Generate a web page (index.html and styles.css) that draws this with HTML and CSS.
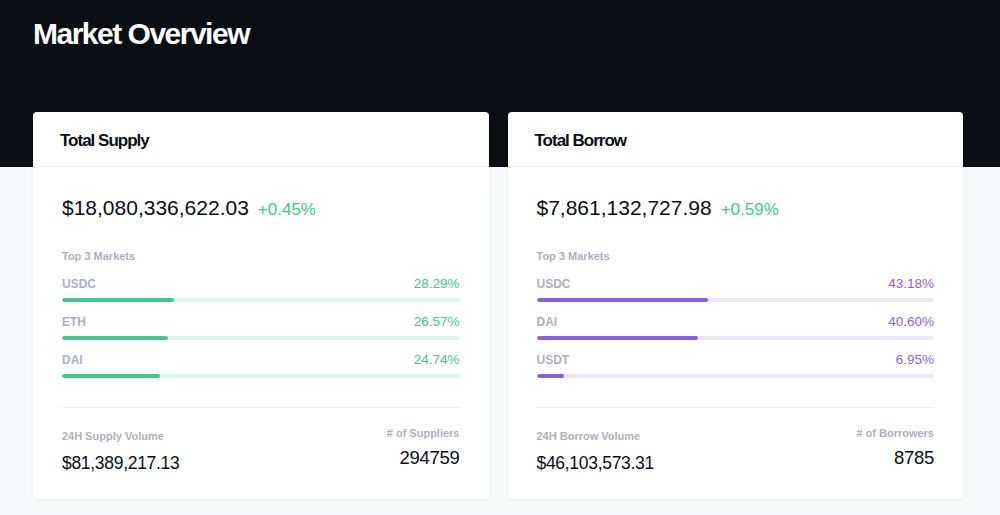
FILE: index.html
```html
<!DOCTYPE html>
<html lang="en">
<head>
    <meta charset="UTF-8">
    <meta name="viewport" content="width=device-width, initial-scale=1.0">
    <title>Market Overview</title>

    <link rel="stylesheet" href="styles.css">
</head>
<body>

<h1 class="page-title">Market Overview</h1>

<div class="cards">

    <div class="card">
        <div class="card-head">Total Supply</div>
        <div class="card-body">
            <div class="total">
                <span class="amount">$18,080,336,622.03</span>
                <span class="change">+0.45%</span>
            </div>

            <div class="label">Top 3 Markets</div>

            <div class="market supply">
                <div class="market-row"><span class="name">USDC</span><span class="pct">28.29%</span></div>
                <div class="track"><div class="fill" style="width: 28.29%"></div></div>
            </div>
            <div class="market supply">
                <div class="market-row"><span class="name">ETH</span><span class="pct">26.57%</span></div>
                <div class="track"><div class="fill" style="width: 26.57%"></div></div>
            </div>
            <div class="market supply">
                <div class="market-row"><span class="name">DAI</span><span class="pct">24.74%</span></div>
                <div class="track"><div class="fill" style="width: 24.74%"></div></div>
            </div>

            <div class="stats">
                <div class="stat">
                    <div class="label">24H Supply Volume</div>
                    <div class="value">$81,389,217.13</div>
                </div>
                <div class="stat right">
                    <div class="label"># of Suppliers</div>
                    <div class="value">294759</div>
                </div>
            </div>
        </div>
    </div>

    <div class="card">
        <div class="card-head">Total Borrow</div>
        <div class="card-body">
            <div class="total">
                <span class="amount">$7,861,132,727.98</span>
                <span class="change">+0.59%</span>
            </div>

            <div class="label">Top 3 Markets</div>

            <div class="market borrow">
                <div class="market-row"><span class="name">USDC</span><span class="pct">43.18%</span></div>
                <div class="track"><div class="fill" style="width: 43.18%"></div></div>
            </div>
            <div class="market borrow">
                <div class="market-row"><span class="name">DAI</span><span class="pct">40.60%</span></div>
                <div class="track"><div class="fill" style="width: 40.60%"></div></div>
            </div>
            <div class="market borrow">
                <div class="market-row"><span class="name">USDT</span><span class="pct">6.95%</span></div>
                <div class="track"><div class="fill" style="width: 6.95%"></div></div>
            </div>

            <div class="stats">
                <div class="stat">
                    <div class="label">24H Borrow Volume</div>
                    <div class="value">$46,103,573.31</div>
                </div>
                <div class="stat right">
                    <div class="label"># of Borrowers</div>
                    <div class="value">8785</div>
                </div>
            </div>
        </div>
    </div>

</div>

</body>
</html>
```

FILE: styles.css
```css
body {
    margin: 0;
    /* dark band behind the title, runs down to the card header line */
    background: linear-gradient(#0b0e13 167px, #f8f9fb 167px);
    color: #0b0e13;
    font-family: 'Liberation Sans', Arial, sans-serif;
    min-height: 515px;
}

.page-title {
    margin: 0;
    padding: 16px 33px 0;
    height: 96px;
    box-sizing: border-box;
    font-size: 30px;
    line-height: 36px;
    font-weight: 700;
    letter-spacing: -1.5px;
    color: #ffffff;
}

.cards {
    display: flex;
    gap: 19px;
    padding: 16px 37px 16px 33px;
}

.card {
    flex: 1;
    background-color: #ffffff;
    border-radius: 4px;
    box-shadow: 0 1px 3px rgba(11, 14, 19, 0.06);
}

.card-head {
    height: 55px;
    box-sizing: border-box;
    padding: 19px 27px 0;
    font-size: 17px;
    line-height: 20px;
    font-weight: 700;
    letter-spacing: -1px;
    border-bottom: 1px solid #f2f3f5;
}

.card-body {
    padding: 28px 29px 25px;
}

.total {
    display: flex;
    align-items: baseline;
    gap: 9px;
    line-height: 26px;
}

.amount {
    font-size: 21px;
}

.change {
    font-size: 17px;
    color: #3dca89;
}

.label {
    font-size: 11px;
    line-height: 14px;
    font-weight: 700;
    color: #aab1bb;
}

.total + .label {
    margin-top: 26px;
    margin-bottom: 13px;
}

.market {
    margin-bottom: 12px;
}

.market-row {
    display: flex;
    justify-content: space-between;
    line-height: 16px;
}

.name {
    font-size: 12px;
    font-weight: 700;
    color: #aab1bb;
}

.pct {
    font-size: 13.5px;
}

.track {
    height: 4px;
    margin-top: 6px;
    border-radius: 2px;
    overflow: hidden;
}

.fill {
    height: 100%;
    border-radius: 2px;
}

.supply .pct { color: #3dca89; }
.supply .track { background-color: #dcf6ea; }
.supply .fill { background-color: #3fcb87; }

.borrow .pct { color: #8a5ee8; }
.borrow .track { background-color: #ebe6fa; }
.borrow .fill { background-color: #8a5ee8; }

.stats {
    display: flex;
    justify-content: space-between;
    align-items: flex-start;
    margin-top: 29px;
    padding-top: 18px;
    border-top: 1px solid #eef0f3;
}

.stat {
    padding-top: 3px;
}

.stat.right {
    padding-top: 0;
    text-align: right;
}

.stat .label {
    font-weight: 700;
}

.value {
    margin-top: 9px;
    font-size: 17.5px;
    line-height: 22px;
    letter-spacing: -0.3px;
}

.stat.right .value {
    margin-top: 7px;
    font-size: 18.5px;
}
```
